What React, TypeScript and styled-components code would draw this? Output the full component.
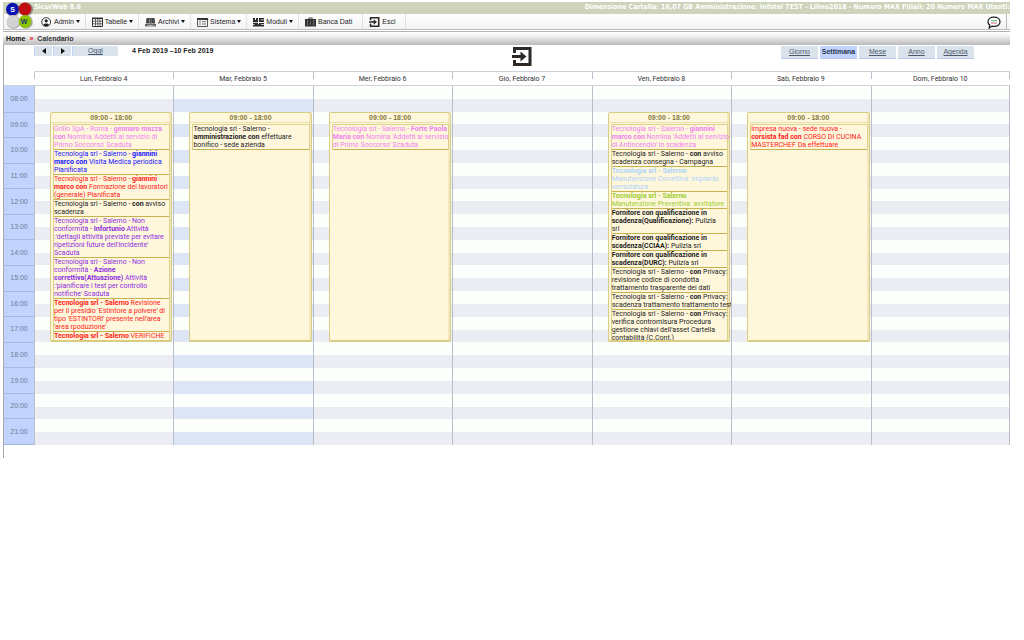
import React from "react";
import styled, { createGlobalStyle } from "styled-components";

const GlobalStyle = createGlobalStyle`
  *, *::before, *::after { box-sizing: border-box; }
  body {
    margin: 0;
    background: #fff;
    font: 7px/8px "Liberation Sans", Arial, sans-serif;
    color: #222;
  }
  button { font: inherit; color: inherit; cursor: pointer; margin: 0; }
  h1, h2, h3, ul { margin: 0; padding: 0; font-size: inherit; }
  ul { list-style: none; }
`;

const Page = styled.div`
  position: relative;
  padding: 2px 14px 0 3px;
  white-space: nowrap;
`;

const LogoMark = styled.svg`
  position: absolute;
  left: 5px;
  top: 2px;
  width: 28px;
  height: 27px;
`;

const TitleBar = styled.header`
  display: flex;
  justify-content: space-between;
  align-items: center;
  height: 12px;
  padding: 0 0 3px 31px;
  background: #cdd4bb;
  color: #fff;
  font-family: "DejaVu Sans Condensed", "DejaVu Sans", Verdana, sans-serif;
  font-weight: bold;
`;

const MenuBar = styled.nav`
  display: flex;
  height: 16px;
  padding: 0 3px 0 31px;
  margin-bottom: 1px;
  border-left: 1px solid #ccc;
  border-bottom: 1px solid #bdbdbd;
  background: linear-gradient(#fff, #f1f2f4);
`;

const MenuItem = styled.button<{ $plain?: boolean }>`
  display: flex;
  align-items: center;
  gap: 2px;
  padding: 0 ${(p) => (p.$plain ? 10 : 5)}px 0 6px;
  border: 0;
  border-right: 1px solid #dcdfe4;
  background: none;
  svg { width: 11px; height: 10px; flex: none; }
`;

const Caret = styled.span`
  border: 2px solid transparent;
  border-top: 3px solid #111;
  border-bottom: 0;
`;

const ChatButton = styled.button`
  display: flex;
  align-items: center;
  margin-left: auto;
  padding: 2px 5px 0 0;
  border: 0;
  border-right: 1px solid #b9b9b9;
  background: none;
  svg { width: 14px; height: 13px; }
`;

const Breadcrumb = styled.nav`
  display: flex;
  align-items: center;
  gap: 4px;
  height: 14px;
  padding-left: 3px;
  border-top: 1px solid #b2b2b2;
  background: linear-gradient(#fdfdfd 10%, #e6e6e6 45%, #b9b9b9);
  font-weight: bold;
  a { color: #111; text-decoration: none; }
  span { color: #e02020; }
  strong { color: #333; }
`;

const CalendarPanel = styled.main`
  padding-bottom: 13px;
  border-left: 1px solid #a9a9a9;
`;

const Toolbar = styled.div`
  display: grid;
  grid-template-columns: 1fr auto minmax(0, 442px);
  align-items: start;
  height: 26px;
  padding: 1px 36px 0 30px;
`;

const RangeNav = styled.div`
  display: flex;
  align-items: center;
  h1 { margin-left: 14px; color: #222; }
`;

const NavButton = styled.button<{ $wide?: boolean }>`
  display: flex;
  align-items: center;
  justify-content: center;
  width: ${(p) => (p.$wide ? 46 : 18)}px;
  height: 10px;
  margin-right: ${(p) => (p.$wide ? 0 : 1)}px;
  padding: 0;
  border: 0;
  border-left: 1px solid #c3d5fb;
  background: #dae2ec;
  color: #46586e;
  text-decoration: ${(p) => (p.$wide ? "underline" : "none")};
  svg { width: 4px; height: 6px; }
`;

const ExitButton = styled.button`
  display: flex;
  padding: 1px 0 0;
  border: 0;
  background: none;
  svg { width: 20px; height: 19px; }
`;

const ViewTabs = styled.div`
  display: flex;
  justify-content: flex-end;
  gap: 2px;
`;

const ViewTab = styled.button<{ $active?: boolean }>`
  width: 37px;
  height: 13px;
  padding: 0;
  border: 0;
  border-bottom: 1px solid #b9cbed;
  background: ${(p) => (p.$active ? "#c2d4fd" : "#dae2ec")};
  color: ${(p) => (p.$active ? "#26344d" : "#4a5a6c")};
  font-weight: ${(p) => (p.$active ? "bold" : "normal")};
  text-decoration: ${(p) => (p.$active ? "none" : "underline")};
`;

const WeekRow = styled.div`
  display: grid;
  grid-template-columns: 30px repeat(7, minmax(0, 1fr));
`;

const tick = "linear-gradient(#b7bfcb, #b7bfcb)";

const DayHead = styled.h2`
  height: 15px;
  padding-top: 3px;
  border-top: 1px solid #cdd2dc;
  border-bottom: 1px solid #cdd2dc;
  background: ${tick} left top / 1px 7px no-repeat;
  color: #333;
  font-family: Roboto, "Liberation Sans", sans-serif;
  font-weight: normal;
  text-align: center;
  &:last-child {
    background: ${tick} left top / 1px 7px no-repeat, ${tick} right top / 1px 7px no-repeat;
  }
`;

const HeadCorner = styled.div`
  border-bottom: 1px solid #cdd2dc;
`;

const WeekBody = styled(WeekRow)`
  grid-template-rows: minmax(0, 1fr);
  height: 359px;
`;

const Hours = styled.div`
  display: grid;
  grid-template-rows: repeat(14, minmax(0, 1fr));
  background: #c2d4fd;
  border-bottom: 1px solid #a4b4d6;
`;

const Hour = styled.div`
  display: grid;
  place-items: center;
  border-top: 1px solid #a9badd;
  color: #6c7b97;
  &:first-child { border-top-color: #c2d4fd; }
`;

const DayColumn = styled.section`
  display: grid;
  grid-template-columns: minmax(0, 1fr);
  grid-template-rows: repeat(28, minmax(0, 1fr));
  border-left: 1px solid #b7bfcb;
  &:last-child { border-right: 1px solid #b7bfcb; }
`;

const Slot = styled.div<{ $row: number; $today?: boolean }>`
  grid-column: 1;
  grid-row: ${(p) => p.$row};
  background: ${(p) => (p.$row % 2 ? "#fdfffc" : p.$today ? "#dde6f5" : "#ecedf3")};
`;

const Card = styled.article`
  grid-column: 1;
  grid-row: 3 / 21;
  display: flex;
  flex-direction: column;
  min-height: 0;
  margin: 0 1px 0 15px;
  border: 1px solid #d9cc83;
  border-bottom-width: 2px;
  border-radius: 2px;
  background: #fff7dc;
  box-shadow: inset -2px 0 #f1e8bf;
`;

const CardTime = styled.h3`
  flex: none;
  height: 10px;
  padding-top: 1px;
  border-bottom: 1px solid #eae0ae;
  color: #857a3c;
  text-align: center;
`;

const CardBody = styled.div`
  min-height: 0;
  overflow-x: visible;
  overflow-y: clip;
  padding: 1px 1px 0 2px;
`;

const ItemList = styled.ul`
  border: 1px solid #ddd18c;
  border-bottom: 0;
  font-family: Roboto, "Liberation Sans", sans-serif;
`;

const Item = styled.li<{ $color: string }>`
  border-bottom: 1px solid #c6b24e;
  color: ${(p) => p.$color};
`;

const Line = styled.span`
  display: block;
`;

const pink = "#ee82ee";
const blue = "#1414ff";
const red = "#ff1a1a";
const black = "#1c1c1c";
const purple = "#8a2be2";
const sky = "#add3fa";
const green = "#9acd32";

/* Bold runs are wrapped in asterisks. */
type Entry = { color: string; lines: string[] };
type Day = { name: string; today?: boolean; entries?: Entry[] };

const days: Day[] = [
  {
    name: "Lun, Febbraio 4",
    entries: [
      { color: pink, lines: ["Grillo SpA - Roma - *gennaro mazza*", "*con* Nomina 'Addetti al servizio di", "Primo Soccorso' Scaduta"] },
      { color: blue, lines: ["Tecnologia srl - Salerno - *giannini*", "*marco con* Visita Medica periodica", "Pianificata"] },
      { color: red, lines: ["Tecnologia srl - Salerno - *giannini*", "*marco con* Formazione dei lavoratori", "(generale) Pianificata"] },
      { color: black, lines: ["Tecnologia srl - Salerno - *con* avviso", "scadenza"] },
      { color: purple, lines: ["Tecnologia srl - Salerno - Non", "conformità - *Infortunio* Attività", ":'dettagli attività previste per evitare", "ripetizioni future dell'incidente'", "Scaduta"] },
      { color: purple, lines: ["Tecnologia srl - Salerno - Non", "conformità - *Azione*", "*correttiva(Attuazione)* Attività", ":'pianificare i test per controllo", "notifiche' Scaduta"] },
      { color: red, lines: ["*Tecnologia srl - Salerno* Revisione", "per il presidio 'Estintore a polvere' di", "tipo 'ESTINTORI' presente nell'area", "'area rpoduzione'"] },
      { color: red, lines: ["*Tecnologia srl - Salerno* VERIFICHE"] },
    ],
  },
  {
    name: "Mar, Febbraio 5",
    today: true,
    entries: [{ color: black, lines: ["Tecnologia srl - Salerno -", "*amministrazione con* effettuare", "bonifico - sede azienda"] }],
  },
  {
    name: "Mer, Febbraio 6",
    entries: [{ color: pink, lines: ["Tecnologia srl - Salerno - *Forte Paola*", "*Maria con* Nomina 'Addetti al servizio", "di Primo Soccorso' Scaduta"] }],
  },
  { name: "Gio, Febbraio 7" },
  {
    name: "Ven, Febbraio 8",
    entries: [
      { color: pink, lines: ["Tecnologia srl - Salerno - *giannini*", "*marco con* Nomina 'Addetti al servizio", "di Antincendio' in scadenza"] },
      { color: black, lines: ["Tecnologia srl - Salerno - *con* avviso", "scadenza consegna - Campagna"] },
      { color: sky, lines: ["*Tecnologia srl - Salerno*", "Manutenzione Correttiva: impianto", "verniciatura"] },
      { color: green, lines: ["*Tecnologia srl - Salerno*", "Manutenzione Preventiva: avvitatore"] },
      { color: black, lines: ["*Fornitore con qualificazione in*", "*scadenza(Qualificazione):* Pulizia", "srl"] },
      { color: black, lines: ["*Fornitore con qualificazione in*", "*scadenza(CCIAA):* Pulizia srl"] },
      { color: black, lines: ["*Fornitore con qualificazione in*", "*scadenza(DURC):* Pulizia srl"] },
      { color: black, lines: ["Tecnologia srl - Salerno - *con* Privacy:", "revisione codice di condotta", "trattamento trasparente dei dati"] },
      { color: black, lines: ["Tecnologia srl - Salerno - *con* Privacy:", "scadenza trattamento trattamento test"] },
      { color: black, lines: ["Tecnologia srl - Salerno - *con* Privacy:", "verifica contromisura Procedura", "gestione chiavi dell'asset Cartella", "contabilità (C.Cont.)"] },
    ],
  },
  {
    name: "Sab, Febbraio 9",
    entries: [{ color: red, lines: ["Impresa nuova - sede nuova -", "*corsista fad con* CORSO DI CUCINA", "MASTERCHEF Da effettuare"] }],
  },
  { name: "Dom, Febbraio 10" },
];

const hours = Array.from({ length: 14 }, (_, i) => `${String(i + 8).padStart(2, "0")}:00`);
const slots = Array.from({ length: 28 }, (_, i) => i + 1);

const Rich = ({ text }: { text: string }) => (
  <Line>{text.split("*").map((part, i) => (i % 2 ? <b key={i}>{part}</b> : part))}</Line>
);

const Logo = () => (
  <LogoMark viewBox="0 0 28 27" aria-label="SW">
    <circle cx="8" cy="8" r="7" fill="#555" opacity=".5" />
    <circle cx="21" cy="7.5" r="7" fill="#555" opacity=".5" />
    <circle cx="8.5" cy="20" r="6.8" fill="#555" opacity=".5" />
    <circle cx="21" cy="20" r="6.8" fill="#555" opacity=".5" />
    <circle cx="7.5" cy="7.2" r="6.4" fill="#0a12b4" />
    <circle cx="20" cy="7" r="6.4" fill="#c00d12" />
    <circle cx="8" cy="19.5" r="6.4" fill="#d2d2d2" />
    <circle cx="20" cy="19.5" r="6.4" fill="#8dc400" />
    <text x="7.5" y="10" fontSize="7" fontWeight="bold" fill="#fff" textAnchor="middle">S</text>
    <text x="19" y="22" fontSize="7" fontWeight="bold" fill="#1e3a6e" textAnchor="middle">W</text>
  </LogoMark>
);

const EnterIcon = () => (
  <svg viewBox="0 0 20 19" fill="none" stroke="#2d2926">
    <path d="M2.5 6V1.5h15.500v16H2.500V13" strokeWidth="3" />
    <path d="M0 9.500h11" strokeWidth="3" />
    <path d="M8.500 4.500l6 5-6 5z" fill="#2d2926" stroke="none" />
  </svg>
);

const AdminIcon = () => (
  <svg viewBox="0 0 11 10">
    <circle cx="5.2" cy="5" r="4.4" fill="#fff" stroke="#333" />
    <circle cx="5.2" cy="3.8" r="1.6" fill="#222" />
    <path d="M2.4 8.2C2.6 5.8 7.8 5.8 8 8.2 6.5 9.4 3.9 9.4 2.4 8.2z" fill="#222" />
  </svg>
);

const TableIcon = () => (
  <svg viewBox="0 0 11 10" fill="none" stroke="#333">
    <path d="M.5 1.5h10v8H.5z" fill="#fff" />
    <path d="M0 1.3h11" strokeWidth="1.6" />
    <path d="M3.5 1v8M5.8 1v8M8 1v8M.5 4.2h10M.5 6.8h10" strokeWidth=".7" />
  </svg>
);

const ArchiveIcon = () => (
  <svg viewBox="0 0 11 10" fill="#444">
    <path d="M1.5 1h8l.6 5.5H.9z" />
    <path d="M0 7h11v2.4H0z" fill="#666" />
    <path d="M4 1.6h1v5H4zM6.4 1.6h.6v5h-.6z" fill="#888" />
    <path d="M3 8h5v.7H3z" fill="#ddd" />
  </svg>
);

const SystemIcon = () => (
  <svg viewBox="0 0 11 10">
    <path d="M.5 1.5h10v8H.5z" fill="#f4f4f4" stroke="#555" />
    <path d="M0 1h11v2H0z" fill="#333" />
    <path d="M2 4.7h2M5 4.7h4M2 7h2M5 7h4" stroke="#777" />
  </svg>
);

const ModulesIcon = () => (
  <svg viewBox="0 0 11 10" fill="#2a2a2a">
    <path d="M0 1h2v2h1V1h2v4H0zM6 1h5v1.5H7.6v.8H11V5H6zM0 5.8h5v1.4h1V6h5v1.2H8v.8h3v1.5H0V8h1.6v-.8H0z" />
  </svg>
);

const DatabaseIcon = () => (
  <svg viewBox="0 0 11 10" fill="#333">
    <path d="M3.5 2V.6h4V2H11v7.4H0V2z" />
    <path d="M4.4 1.4h2.2V2H4.4z" fill="#fff" />
    <path d="M2.4 3v5.6M8.4 3v5.6M5.4 4.5v3" stroke="#999" strokeWidth=".6" />
  </svg>
);

const ChatIcon = () => (
  <svg viewBox="0 0 14 13">
    <path d="M7 1.2c3.4 0 6 1.9 6 4.6s-2.6 4.6-6 4.6c-.8 0-1.5-.1-2.1-.3L2.3 12l.4-2.9C1.6 8.3 1 7.2 1 5.8 1 3.1 3.6 1.2 7 1.2z" fill="#fff" stroke="#222" strokeWidth="1.3" />
    <path d="M4 4.7h6" stroke="#4fc46a" strokeWidth="1" />
    <path d="M4 7h6" stroke="#e0607a" strokeWidth="1" />
  </svg>
);

const menu = [
  { label: "Admin", Icon: AdminIcon },
  { label: "Tabelle", Icon: TableIcon },
  { label: "Archivi", Icon: ArchiveIcon },
  { label: "Sistema", Icon: SystemIcon },
  { label: "Moduli", Icon: ModulesIcon },
  { label: "Banca Dati", Icon: DatabaseIcon, plain: true },
  { label: "Esci", Icon: EnterIcon, plain: true },
];

export default function App() {
  return (
    <Page>
      <GlobalStyle />
      <TitleBar>
        <span>SicurWeb 8.6</span>
        <span>
          Dimensione Cartella: 16,07 GB Amministrazione: Infotel TEST - Lilino2018 - Numero MAX Filiali: 20 Numero MAX Utenti:
        </span>
      </TitleBar>
      <MenuBar>
        {menu.map(({ label, Icon, plain }) => (
          <MenuItem key={label} $plain={plain}>
            <Icon />
            {label}
            {!plain && <Caret />}
          </MenuItem>
        ))}
        <ChatButton aria-label="Chat">
          <ChatIcon />
        </ChatButton>
      </MenuBar>
      <Logo />
      <Breadcrumb>
        <a href="#home">Home</a>
        <span>»</span>
        <strong>Calendario</strong>
      </Breadcrumb>
      <CalendarPanel>
        <Toolbar>
          <RangeNav>
            <NavButton aria-label="Settimana precedente">
              <svg viewBox="0 0 4 6"><path d="M4 0v6L0 3z" fill="#111" /></svg>
            </NavButton>
            <NavButton aria-label="Settimana successiva">
              <svg viewBox="0 0 4 6"><path d="M0 0v6l4-3z" fill="#111" /></svg>
            </NavButton>
            <NavButton $wide>Oggi</NavButton>
            <h1>4 Feb 2019 –10 Feb 2019</h1>
          </RangeNav>
          <ExitButton aria-label="Esci dal calendario">
            <EnterIcon />
          </ExitButton>
          <ViewTabs>
            {["Giorno", "Settimana", "Mese", "Anno", "Agenda"].map((view) => (
              <ViewTab key={view} $active={view === "Settimana"}>{view}</ViewTab>
            ))}
          </ViewTabs>
        </Toolbar>
        <WeekRow>
          <HeadCorner />
          {days.map((day) => <DayHead key={day.name}>{day.name}</DayHead>)}
        </WeekRow>
        <WeekBody>
          <Hours>
            {hours.map((hour) => <Hour key={hour}>{hour}</Hour>)}
          </Hours>
          {days.map((day) => (
            <DayColumn key={day.name}>
              {slots.map((row) => <Slot key={row} $row={row} $today={day.today} />)}
              {day.entries && (
                <Card>
                  <CardTime>09:00 - 18:00</CardTime>
                  <CardBody>
                    <ItemList>
                      {day.entries.map((entry, i) => (
                        <Item key={i} $color={entry.color}>
                          {entry.lines.map((line) => <Rich key={line} text={line} />)}
                        </Item>
                      ))}
                    </ItemList>
                  </CardBody>
                </Card>
              )}
            </DayColumn>
          ))}
        </WeekBody>
      </CalendarPanel>
    </Page>
  );
}
